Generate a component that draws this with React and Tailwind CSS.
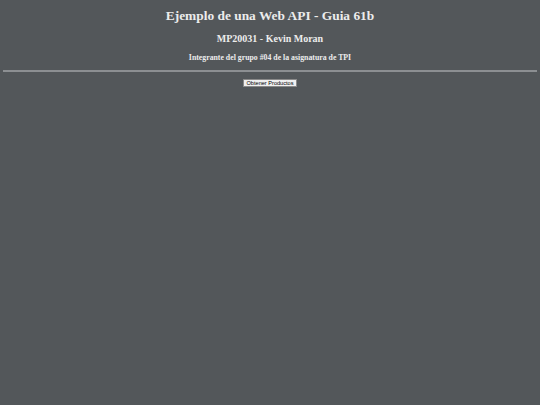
export default function App() {
  return (
    <div className="min-h-screen bg-[#53575a] px-[3px] pt-[8px] text-[#ececec]" style={{ fontFamily: '"Liberation Serif", serif' }}>
      <h1 className="text-center text-[13.4px] font-bold leading-[16px]">Ejemplo de una Web API - Guia 61b</h1>
      <h2 className="mt-[8.7px] text-center text-[10px] font-bold leading-[12px]">MP20031 - Kevin Moran</h2>
      <h3 className="mt-[8px] text-center text-[7.8px] font-bold leading-[10px]">Integrante del grupo #04 de la asignatura de TPI</h3>
      <hr className="mt-[7px] border-t-[2px] border-[#8c8f92]" />
      <div className="mt-[7px] flex justify-center">
        <button
          className="border border-[#8a8a8a] bg-[#f0f0f0] px-[3px] text-[5.6px] leading-[6px] text-black"
          style={{ fontFamily: '"Liberation Sans", sans-serif' }}
        >
          Obtener Productos
        </button>
      </div>
    </div>
  );
}
